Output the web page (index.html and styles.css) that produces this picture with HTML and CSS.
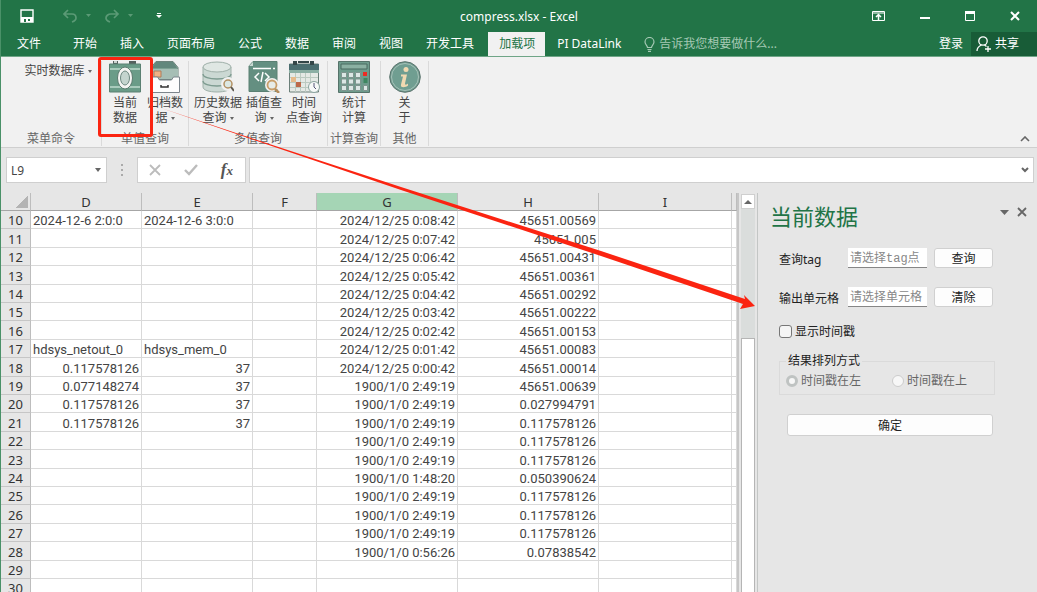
FILE: index.html
```html
<!DOCTYPE html>
<html lang="zh-CN">
<head>
  <meta charset="UTF-8">
  <title>compress.xlsx - Excel</title>
  <link rel="stylesheet" href="styles.css">
</head>
<body>
<div class="window">

  <header class="top">
    <div class="titlebar">
      <div class="quick">
        <button class="save" aria-label="保存">
          <svg width="14" height="14" viewBox="0 0 14 14"><path d="M1 1h12v12H1z" fill="none" stroke="#fff" stroke-width="1.4"/><path d="M1 8h12v5H1z" fill="#fff"/><path d="M4 10h2v3H4zM8 10h2v2H8z" fill="#227447"/></svg>
        </button>
        <button class="undo" aria-label="撤消">
          <svg width="28" height="14" viewBox="0 0 28 14"><path d="M5 1L1 5l4 4M1 5h8c3 0 4 2 4 4s-1 3-4 4" fill="none" stroke="#5b9a76" stroke-width="1.7"/><path d="M23 5h5l-2.500 3z" fill="#5b9a76"/></svg>
        </button>
        <button class="redo" aria-label="恢复">
          <svg width="28" height="14" viewBox="0 0 28 14"><path d="M9 1l4 4-4 4M13 5H6C3 5 1 7 1 9s1 3 4 4" fill="none" stroke="#5b9a76" stroke-width="1.700"/><path d="M23 5h5l-2.500 3z" fill="#5b9a76"/></svg>
        </button>
        <button class="more" aria-label="自定义快速访问工具栏">
          <svg width="6" height="6" viewBox="0 0 6 6"><path d="M1 0h4v1H1zM0 2h6L3 5z" fill="#fff"/></svg>
        </button>
      </div>
      <div class="title">compress.xlsx - Excel</div>
      <div class="controls">
        <button aria-label="功能区显示选项">
          <svg width="13" height="10" viewBox="0 0 13 10"><path d="M.5.5h12v9H.5zM0 2h13" fill="none" stroke="#fff"/><path d="M6.500 9V4M4 6l2.500-2.500L9 6" fill="none" stroke="#fff" stroke-width="1.500"/></svg>
        </button>
        <button aria-label="最小化">
          <svg width="10" height="10" viewBox="0 0 10 10"><path d="M0 6h10v2H0z" fill="#fff"/></svg>
        </button>
        <button aria-label="最大化">
          <svg width="10" height="10" viewBox="0 0 10 10"><path d="M.5.5h9v9h-9z" fill="none" stroke="#fff"/><path d="M0 0h10v3H0z" fill="#fff"/></svg>
        </button>
        <button aria-label="关闭">
          <svg width="10" height="10" viewBox="0 0 10 10"><path d="M1 1l8 8M9 1L1 9" stroke="#fff" stroke-width="2"/></svg>
        </button>
      </div>
    </div>

    <nav class="tabs">
      <a href="#" class="file">文件</a>
      <a href="#">开始</a>
      <a href="#">插入</a>
      <a href="#">页面布局</a>
      <a href="#">公式</a>
      <a href="#">数据</a>
      <a href="#">审阅</a>
      <a href="#">视图</a>
      <a href="#">开发工具</a>
      <a href="#" class="active">加载项</a>
      <a href="#">PI DataLink</a>
      <a href="#" class="tell">
        <svg width="11" height="15" viewBox="0 0 11 15"><path d="M3.500 10.500C3.500 8.500 1 7.500 1 5a4.500 4.500 0 0 1 9 0c0 2.500-2.500 3.500-2.500 5.500zM3.500 12.500h4M4 14.300h3" fill="none" stroke="#a5c9b4" stroke-width="1.200"/></svg>
        告诉我您想要做什么...
      </a>
      <a href="#" class="login">登录</a>
      <button class="share">
        <svg width="16" height="16" viewBox="0 0 16 16"><circle cx="7" cy="5" r="4.200" fill="none" stroke="#fff" stroke-width="1.300"/><path d="M1 15c0-3 2-5 4.500-6M8.500 9l2 1.500M9 13h6M12 10v6" fill="none" stroke="#fff" stroke-width="1.300"/></svg>
        共享
      </button>
    </nav>
  </header>

  <section class="ribbon">
    <div class="group menu">
      <div class="items"><button class="drop">实时数据库 <i class="caret"></i></button></div>
      <div class="name">菜单命令</div>
    </div>

    <div class="group single">
      <div class="items">
        <button class="tool marked">
          <svg width="32" height="32" viewBox="0 0 32 32"><path d="M4 0h5v3H4zM20 0h7v3h-7z" fill="#55615e"/><path d="M5 0h3v2H5z" fill="#cbd2cf"/><path d="M.5 3h31v28H.5z" fill="#6a9c88" stroke="#5a8072"/><path d="M1 8h30M1 26h30" stroke="#a9cbbc" stroke-width="2"/><ellipse cx="16" cy="17" rx="7.500" ry="11" fill="#f4f4f2" stroke="#5a7a6e"/><ellipse cx="16" cy="17" rx="4.500" ry="7" fill="#c4d4ce" stroke="#6d8880"/></svg>
          <span>当前<br>数据</span>
        </button>
        <button class="tool archive">
          <svg width="30" height="32" viewBox="0 0 30 32"><path d="M6 .5h17l5 6v12H1v-12z" fill="#7da193" stroke="#6c827b"/><path d="M6 1h17l4 6H2z" fill="#62877c"/><path d="M2 8h26v10H2z" fill="#a6beb5"/><path d="M4 10h7v6H4z" fill="#efb184" stroke="#ad7c5c"/><path d="M.5 16h7l2 3h12l2-3h6v15.500H.5z" fill="#fdfdfd" stroke="#7c858c"/><path d="M11 24v2h7v-2" fill="none" stroke="#333" stroke-width="1.500"/></svg>
          <span>归档数<br>据 <i class="caret"></i></span>
        </button>
      </div>
      <div class="name">单值查询</div>
    </div>

    <div class="group multi">
      <div class="items">
        <button class="tool wide">
          <svg width="32" height="32" viewBox="0 0 32 32"><path d="M1 6v20c0 3 6 5 14 5s14-2 14-5V6z" fill="#cbd8d3" stroke="#9fb0a9"/><ellipse cx="15" cy="6" rx="14" ry="5" fill="#dfe7e3" stroke="#9fb0a9"/><path d="M1 13c0 3 6 5 14 5s14-2 14-5M1 20c0 3 6 5 14 5s14-2 14-5" fill="none" stroke="#7d9b90" stroke-width="1.300"/><circle cx="26" cy="23" r="7" fill="#f1f1f1"/><circle cx="26" cy="23" r="4" fill="#dce8e3" stroke="#b29062" stroke-width="1.500"/><path d="M29 26l3 4" stroke="#5d584e" stroke-width="2"/></svg>
          <span>历史数据<br>查询 <i class="caret"></i></span>
        </button>
        <button class="tool">
          <svg width="32" height="32" viewBox="0 0 32 32"><path d="M5 .5h24v30H1V5z" fill="#648f81" stroke="#5a8073"/><path d="M1 5l4-4v4z" fill="#c9d8d2"/><path d="M5 7.500h18M25 7.500h2" stroke="#fff" stroke-width="1.500"/><path d="M11 12l-4 4 4 4M17 12l4 4-4 4M15 11l-2 10" fill="none" stroke="#fff" stroke-width="1.500"/><circle cx="24" cy="24" r="7" fill="#f1f1f1"/><circle cx="24" cy="24" r="4.500" fill="#e7ece8" stroke="#c89d68" stroke-width="1.800"/><path d="M27 28l4 4" stroke="#b38c5b" stroke-width="2.500"/></svg>
          <span>插值查<br>询 <i class="caret"></i></span>
        </button>
        <button class="tool">
          <svg width="32" height="32" viewBox="0 0 32 32"><path d="M1.500 3h29v28h-29z" fill="#e5e9e5" stroke="#6b7f79"/><path d="M1 3h30v6H1z" fill="#4b6e70"/><path d="M1 9h30v3H1z" fill="#8cafa4"/><path d="M5 0h4v4H5zM22 0h4v4h-4z" fill="#344648"/><path d="M10 1h11" stroke="#344648" stroke-width="2"/><path d="M2 16.500h28M2 21.500h28M2 26.500h28M7.500 12v19M12.500 12v19M17.500 12v19M22.500 12v19" stroke="#bccac1"/><path d="M3 16h5v5H3z" fill="#e6ba8b"/><path d="M8 21h5v5H8z" fill="#bd6849"/><circle cx="26" cy="26" r="5.500" fill="#f7f9f8" stroke="#8ba49f"/><path d="M26 22v4l2 2" fill="none" stroke="#557"/></svg>
          <span>时间<br>点查询</span>
        </button>
      </div>
      <div class="name">多值查询</div>
    </div>

    <div class="group calc">
      <div class="items">
        <button class="tool">
          <svg width="32" height="32" viewBox="0 0 32 32"><path d="M.5.500h31v31H.5z" fill="#6e9b8c" stroke="#56736a"/><path d="M3 3h26v5H3z" fill="#8bb0a2" stroke="#4b6a60"/><g fill="#dce7e5" stroke="#7e948e"><path d="M3.500 11.500h5v5h-5zM10.500 11.500h5v5h-5zM17.500 11.500h5v5h-5zM3.500 18h5v5h-5zM10.500 18h5v5h-5zM17.500 18h5v5h-5zM3.500 24.500h5v5h-5zM10.500 24.500h5v5h-5zM17.500 24.500h5v5h-5z"/></g><path d="M25 11h4v4h-4z" fill="#ed2b24"/><path d="M25.500 17h4v5h-4z" fill="#3e8661"/><path d="M25.500 24.500h4v5h-4z" fill="#dce7e5" stroke="#7e948e"/></svg>
          <span>统计<br>计算</span>
        </button>
      </div>
      <div class="name">计算查询</div>
    </div>

    <div class="group other">
      <div class="items">
        <button class="tool">
          <svg width="32" height="32" viewBox="0 0 32 32"><circle cx="16" cy="16" r="15.300" fill="#709e91" stroke="#5a716b"/><circle cx="16" cy="16" r="13.500" fill="none" stroke="#a7c1b8"/><circle cx="17" cy="8.500" r="2.500" fill="#f1d9b1"/><path d="M12 13.500h6l-2 9c0 2 2 1 3 0v2c-2 2-8 3-7-1l2-8h-2z" fill="#f1d9b1"/></svg>
          <span>关<br>于</span>
        </button>
      </div>
      <div class="name">其他</div>
    </div>

    <button class="collapse" aria-label="折叠功能区">
      <svg width="10" height="6" viewBox="0 0 10 6"><path d="M1 5l4-4 4 4" fill="none" stroke="#666" stroke-width="1.600"/></svg>
    </button>
  </section>

  <section class="formula">
    <div class="namebox">
      <input type="text" value="L9" aria-label="名称框">
      <i class="caret"></i>
    </div>
    <div class="dots"><i></i><i></i><i></i></div>
    <div class="fx">
      <button aria-label="取消"><svg width="12" height="12" viewBox="0 0 12 12"><path d="M1 1l10 10M11 1L1 11" stroke="#bcbcbc" stroke-width="1.800"/></svg></button>
      <button aria-label="输入"><svg width="14" height="12" viewBox="0 0 14 12"><path d="M1 6l4 4 8-9" fill="none" stroke="#bcbcbc" stroke-width="2.400"/></svg></button>
      <button class="fn" aria-label="插入函数"><em>f</em>x</button>
    </div>
    <div class="bar">
      <input type="text" aria-label="编辑栏">
      <svg width="8" height="6" viewBox="0 0 8 6"><path d="M1 1l3 3 3-3" fill="none" stroke="#666" stroke-width="2"/></svg>
    </div>
  </section>

  <main class="work">
    <div class="sheet">
      <table>
        <colgroup>
          <col class="c-num"><col class="c-d"><col class="c-e"><col class="c-f"><col class="c-g"><col class="c-h"><col class="c-i"><col>
        </colgroup>
        <thead>
          <tr><th class="corner"></th><th>D</th><th>E</th><th>F</th><th class="picked">G</th><th>H</th><th>I</th><th></th></tr>
        </thead>
        <tbody>
          <tr><th>10</th><td class="txt">2024-12-6 2:0:0</td><td class="txt">2024-12-6 3:0:0</td><td></td><td>2024/12/25 0:08:42</td><td>45651.00569</td><td></td><td></td></tr>
          <tr><th>11</th><td></td><td></td><td></td><td>2024/12/25 0:07:42</td><td>45651.005</td><td></td><td></td></tr>
          <tr><th>12</th><td></td><td></td><td></td><td>2024/12/25 0:06:42</td><td>45651.00431</td><td></td><td></td></tr>
          <tr><th>13</th><td></td><td></td><td></td><td>2024/12/25 0:05:42</td><td>45651.00361</td><td></td><td></td></tr>
          <tr><th>14</th><td></td><td></td><td></td><td>2024/12/25 0:04:42</td><td>45651.00292</td><td></td><td></td></tr>
          <tr><th>15</th><td></td><td></td><td></td><td>2024/12/25 0:03:42</td><td>45651.00222</td><td></td><td></td></tr>
          <tr><th>16</th><td></td><td></td><td></td><td>2024/12/25 0:02:42</td><td>45651.00153</td><td></td><td></td></tr>
          <tr><th>17</th><td class="txt">hdsys_netout_0</td><td class="txt">hdsys_mem_0</td><td></td><td>2024/12/25 0:01:42</td><td>45651.00083</td><td></td><td></td></tr>
          <tr><th>18</th><td>0.117578126</td><td>37</td><td></td><td>2024/12/25 0:00:42</td><td>45651.00014</td><td></td><td></td></tr>
          <tr><th>19</th><td>0.077148274</td><td>37</td><td></td><td>1900/1/0 2:49:19</td><td>45651.00639</td><td></td><td></td></tr>
          <tr><th>20</th><td>0.117578126</td><td>37</td><td></td><td>1900/1/0 2:49:19</td><td>0.027994791</td><td></td><td></td></tr>
          <tr><th>21</th><td>0.117578126</td><td>37</td><td></td><td>1900/1/0 2:49:19</td><td>0.117578126</td><td></td><td></td></tr>
          <tr><th>22</th><td></td><td></td><td></td><td>1900/1/0 2:49:19</td><td>0.117578126</td><td></td><td></td></tr>
          <tr><th>23</th><td></td><td></td><td></td><td>1900/1/0 2:49:19</td><td>0.117578126</td><td></td><td></td></tr>
          <tr><th>24</th><td></td><td></td><td></td><td>1900/1/0 1:48:20</td><td>0.050390624</td><td></td><td></td></tr>
          <tr><th>25</th><td></td><td></td><td></td><td>1900/1/0 2:49:19</td><td>0.117578126</td><td></td><td></td></tr>
          <tr><th>26</th><td></td><td></td><td></td><td>1900/1/0 2:49:19</td><td>0.117578126</td><td></td><td></td></tr>
          <tr><th>27</th><td></td><td></td><td></td><td>1900/1/0 2:49:19</td><td>0.117578126</td><td></td><td></td></tr>
          <tr><th>28</th><td></td><td></td><td></td><td>1900/1/0 0:56:26</td><td>0.07838542</td><td></td><td></td></tr>
          <tr><th>29</th><td></td><td></td><td></td><td></td><td></td><td></td><td></td></tr>
          <tr><th>30</th><td></td><td></td><td></td><td></td><td></td><td></td><td></td></tr>
        </tbody>
      </table>
    </div>

    <div class="scroll">
      <button class="up" aria-label="向上滚动"><svg width="8" height="4" viewBox="0 0 8 4"><path d="M0 4l4-4 4 4z" fill="#666"/></svg></button>
      <div class="track"></div>
      <div class="thumb"></div>
    </div>

    <aside class="pane">
      <div class="pane-head">
        <h2>当前数据</h2>
        <button aria-label="任务窗格选项"><svg width="9" height="5" viewBox="0 0 9 5"><path d="M0 0h9L4.500 5z" fill="#666"/></svg></button>
        <button aria-label="关闭窗格"><svg width="10" height="10" viewBox="0 0 10 10"><path d="M1 1l8 8M9 1L1 9" stroke="#666" stroke-width="1.800"/></svg></button>
      </div>
      <form>
        <div class="row">
          <label for="tag">查询tag</label>
          <input type="text" id="tag" placeholder="请选择tag点">
          <button type="button">查询</button>
        </div>
        <div class="row">
          <label for="cell">输出单元格</label>
          <input type="text" id="cell" placeholder="请选择单元格">
          <button type="button">清除</button>
        </div>
        <div class="check">
          <input type="checkbox" id="stamp">
          <label for="stamp">显示时间戳</label>
        </div>
        <fieldset disabled>
          <legend>结果排列方式</legend>
          <label><input type="radio" name="side" checked>时间戳在左</label>
          <label><input type="radio" name="side">时间戳在上</label>
        </fieldset>
        <button type="button" class="ok">确定</button>
      </form>
    </aside>
  </main>

  <!-- pointer from the marked button to the task pane -->
  <svg class="arrow" width="760" height="320" viewBox="0 0 760 320">
    <path d="M160 108L250 138 400 187 600 251 744 299 743 295 754 306 739 309 742 304 600 256 400 190 250 139z" fill="#fb2411"/>
  </svg>
</div>
</body>
</html>
```
FILE: styles.css
```css
*,
*::after {
  box-sizing: border-box;
}

body {
  margin: 0;
  font-family: "Noto Sans", "Noto Sans CJK SC", sans-serif;
  font-size: 12px;
  color: #444;
  background: #e6e6e6;
}

button,
input {
  font: inherit;
  color: inherit;
  margin: 0;
  padding: 0;
  border: 0;
  background: none;
}

svg {
  display: block;
  flex: none;
}

a {
  color: inherit;
  text-decoration: none;
}

.window {
  position: relative;
  display: flex;
  flex-direction: column;
  height: 100vh;
  overflow: hidden;
  border-left: 1px solid #4a9168;
}

/* title bar and tabs */
.top {
  flex: none;
  background: #227447;
  color: #fff;
  border-bottom: 1px solid #6fa587;
}

.titlebar {
  display: grid;
  grid-template-columns: 1fr auto 1fr;
  align-items: center;
  height: 32px;
}

.quick {
  display: flex;
  align-items: center;
  padding-left: 19px;
  gap: 14px;
}

.quick .undo {
  margin-left: 15px;
}

.quick .more {
  margin-left: 9px;
}

.controls {
  display: flex;
  justify-content: flex-end;
  align-items: center;
  gap: 35px;
  padding-right: 17px;
}

.tabs {
  display: flex;
  height: 24px;
  line-height: 24px;
  white-space: nowrap;
}

.tabs a {
  padding: 0 12px 0 11px;
}

.tabs .file {
  width: 61px;
  padding-left: 16px;
}

.tabs .active {
  margin-left: 2px;
  padding: 0 10px 0 11px;
  background: #f1f1f1;
  color: #227447;
}

.tabs .active + a {
  padding-left: 12px;
}

.tabs .tell {
  display: flex;
  align-items: center;
  gap: 4px;
  color: #a5c9b4;
}

.tabs .login {
  margin-left: auto;
  padding: 0 8px;
}

.share {
  display: flex;
  align-items: center;
  gap: 3px;
  width: 66px;
  padding-left: 5px;
  background: #185c37;
}

/* ribbon */
.ribbon {
  flex: none;
  display: flex;
  height: 91px;
  padding-top: 4px;
  background: #f1f1f1;
  border-bottom: 1px solid #cfcfcf;
  line-height: 15px;
}

.group {
  display: flex;
  flex-direction: column;
  justify-content: space-between;
  height: 85px;
  border-right: 1px solid #dadada;
  white-space: nowrap;
}

.menu { width: 101px; }
.single { width: 87px; }
.multi { width: 139px; }
.calc { width: 53px; }
.other { width: 48px; }

.items {
  display: flex;
  justify-content: center;
}

.name {
  text-align: center;
  color: #666;
}

.calc .name {
  margin: 0 -2px;
}

.drop {
  margin: 2px 0 0 14px;
}

.caret {
  display: inline-block;
  border: 2px solid transparent;
  border-top: 3px solid #666;
  border-bottom: 0;
  vertical-align: middle;
}

.tool {
  position: relative;
  display: flex;
  flex-direction: column;
  align-items: center;
  width: 40px;
  gap: 2px;
}

.tool.wide {
  width: 52px;
}

.marked::after {
  content: "";
  position: absolute;
  top: -4px;
  left: -7px;
  width: 55px;
  height: 80px;
  border: 3px solid #fb2411;
  border-radius: 3px;
}

.marked {
  z-index: 1;
}

.collapse {
  align-self: flex-end;
  margin: 0 7px 5px auto;
}

/* formula bar */
.formula {
  flex: none;
  display: flex;
  height: 45px;
  padding: 9px 3px 10px 5px;
}

.namebox,
.fx,
.bar {
  display: flex;
  align-items: center;
  background: #fff;
  border: 1px solid #cfcfcf;
}

.namebox {
  width: 101px;
  padding: 0 5px 0 4px;
}

.namebox input {
  flex: 1;
  min-width: 0;
}

.namebox .caret {
  border-width: 4px 3px 0;
}

.dots {
  display: flex;
  flex-direction: column;
  justify-content: center;
  align-items: center;
  gap: 3px;
  width: 30px;
}

.dots i {
  width: 2px;
  height: 2px;
  background: #aaa;
}

.fx {
  justify-content: space-between;
  width: 109px;
  padding: 0 12px 0 11px;
}

.fn {
  font-family: "Liberation Serif", serif;
  font-style: italic;
  font-weight: bold;
  font-size: 13px;
  color: #555;
}

.fn em {
  font-size: 17px;
}

.bar {
  flex: 1;
  margin-left: 3px;
  padding-right: 4px;
}

.bar input {
  flex: 1;
}

/* sheet */
.work {
  flex: 1;
  display: flex;
  min-height: 0;
}

.sheet {
  flex: 1;
  overflow: hidden;
  border-right: 2px solid #c6c6c6;
}

table {
  width: 100%;
  table-layout: fixed;
  border-spacing: 0;
  background: #fff;
}

.c-num { width: 30px; }
.c-d, .c-e { width: 111px; }
.c-f { width: 64px; }
.c-g, .c-h { width: 141px; }
.c-i { width: 133px; }

th,
td {
  height: 18px;
  padding: 2px 2px 0;
  line-height: 15px;
  white-space: nowrap;
  border-right: 1px solid #d9d9d9;
  border-bottom: 1px solid #d9d9d9;
}

/* rows alternate so that five of them make 92px */
tbody tr:nth-child(5n+2) > *,
tbody tr:nth-child(5n+4) > * {
  height: 19px;
}

td {
  font-family: Roboto, sans-serif;
  font-size: 13px;
  text-align: right;
}

td.txt {
  text-align: left;
}

th {
  font-size: 13px;
  font-weight: normal;
  color: #333;
  background: #e6e6e6;
  border-right-color: #bdbdbd;
  border-bottom-color: #c6c6c6;
}

thead th {
  border-bottom-color: #a6a6a6;
}

thead .picked {
  background: #a5d5b5;
}

thead .corner {
  background: linear-gradient(135deg, transparent 50%, #b3b3b3 50%) 15px 3px / 12px 12px no-repeat #e6e6e6;
}

.scroll {
  display: flex;
  flex-direction: column;
  width: 19px;
  padding: 1px 2px 0 2px;
  border-right: 1px solid #c3c6c5;
}

.up {
  display: flex;
  align-items: center;
  justify-content: center;
  height: 15px;
  background: #fff;
  border: 1px solid #cfcfcf;
}

.track {
  height: 129px;
  background: #dadddc;
}

.thumb {
  flex: 1;
  background: #fff;
  border: 1px solid #b5b5b5;
  border-bottom: 0;
}

/* task pane */
.pane {
  width: 279px;
  color: #222;
}

.pane-head {
  display: flex;
  align-items: center;
  gap: 8px;
  height: 38px;
  padding: 0 10px 0 12px;
}

.pane-head h2 {
  flex: 1;
  margin: 8px 0 0;
  font-size: 22px;
  line-height: 28px;
  font-weight: normal;
  color: #227447;
}

form {
  padding: 17px 44px 0 21px;
}

.row {
  display: flex;
  align-items: center;
  gap: 7px;
  height: 20px;
  margin-bottom: 19px;
}

.row label {
  width: 62px;
  white-space: nowrap;
  padding-top: 2px;
}

.row input {
  flex: 1;
  min-width: 0;
  height: 20px;
  padding: 0 2px;
  background: #fff;
  border-bottom: 1px solid #868686;
}

.row input::placeholder {
  font-family: "Liberation Mono", "Noto Sans CJK SC", monospace;
  color: #888;
}

.row button,
.ok {
  height: 20px;
  background: #fdfdfd;
  border: 1px solid #d0d0d0;
  border-radius: 3px;
}

.row button {
  width: 59px;
}

.check {
  display: flex;
  align-items: center;
  gap: 3px;
  height: 18px;
  margin-top: -4px;
}

.check input {
  appearance: none;
  width: 13px;
  height: 13px;
  background: #f5f5f5;
  border: 1px solid #777;
  border-radius: 3px;
}

fieldset {
  display: flex;
  gap: 31px;
  margin: 12px -2px 0 0;
  padding: 2px 6px 4px;
  border: 1px solid #dadada;
  color: #666;
}

legend {
  padding: 0 2px;
  line-height: 18px;
  color: #222;
}

fieldset label {
  display: flex;
  align-items: center;
  gap: 3px;
  line-height: 18px;
}

fieldset input {
  appearance: none;
  width: 12px;
  height: 12px;
  background: #f7f7f7;
  border: 1px solid #ccc;
  border-radius: 50%;
}

fieldset input:checked {
  border: 3px solid #bfc3c2;
}

.ok {
  display: block;
  width: calc(100% - 8px);
  height: 22px;
  margin: 19px 0 0 8px;
}

.arrow {
  position: absolute;
  top: 0;
  left: 0;
  pointer-events: none;
}
```
